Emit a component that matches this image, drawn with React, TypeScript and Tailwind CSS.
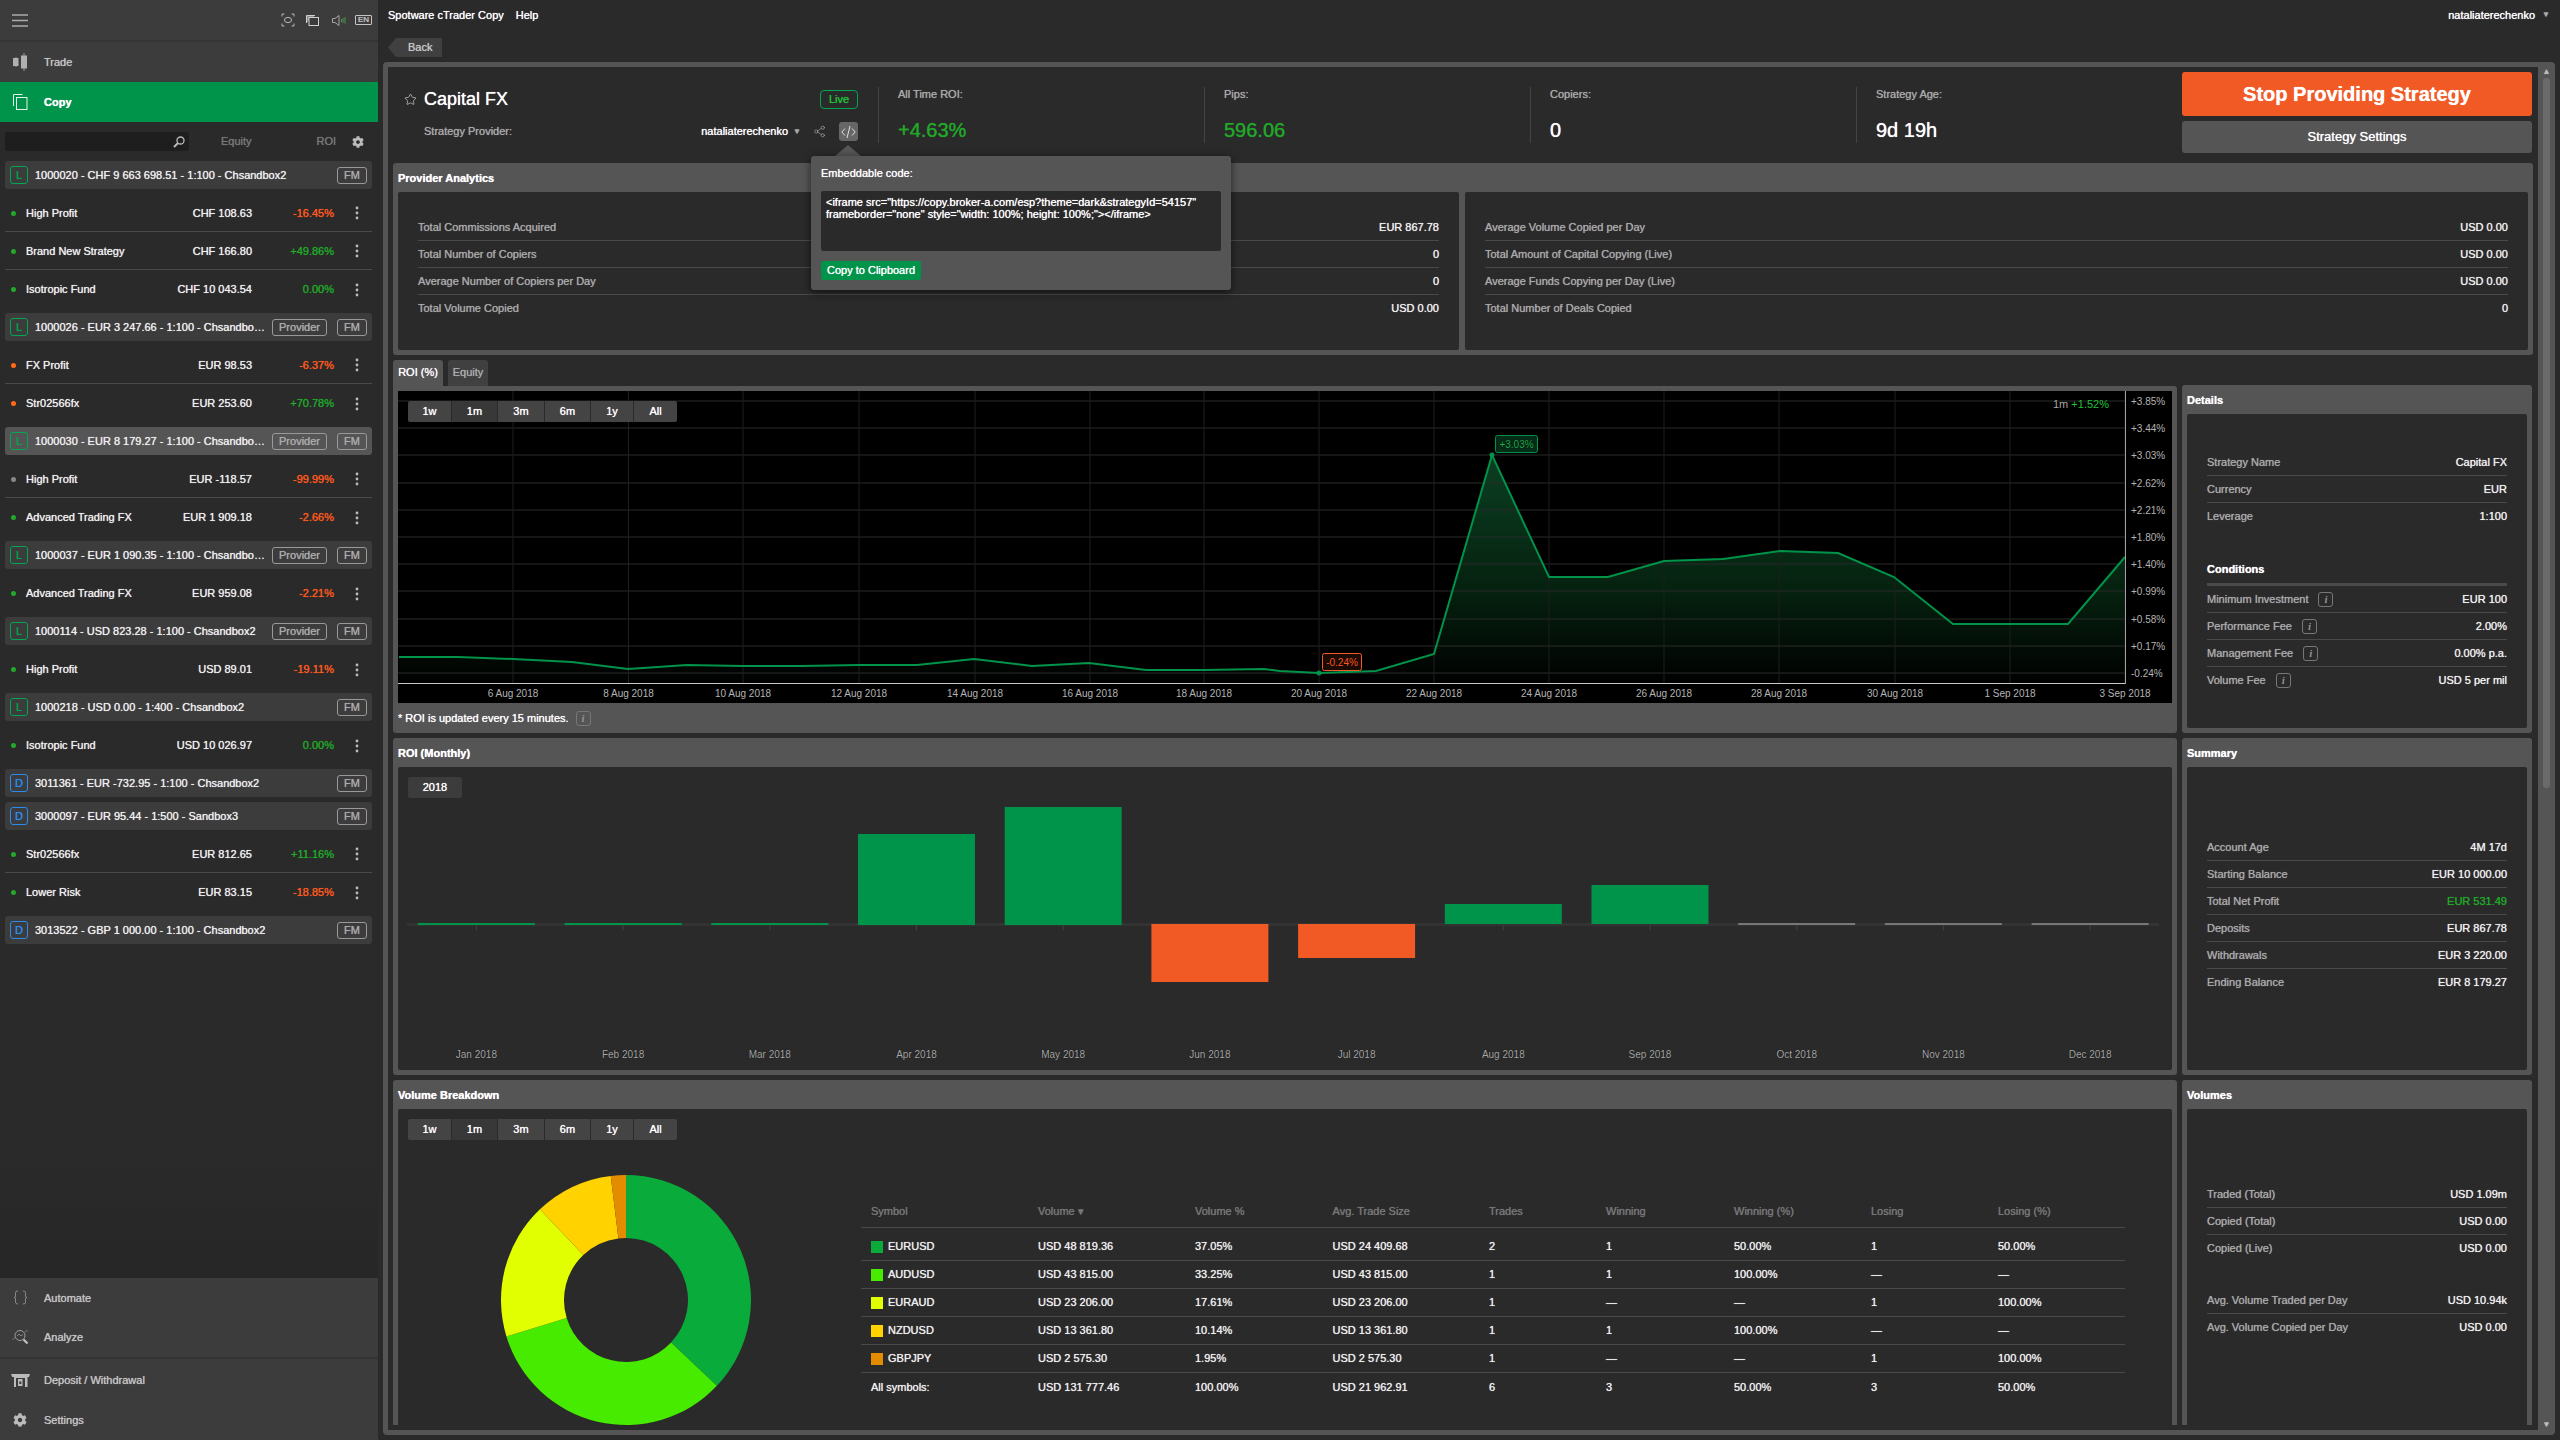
import { ReactNode } from "react";
import { FaCog } from "react-icons/fa";
import { Braces, Share2, Star } from "lucide-react";

type Strat = { dot: string; name: string; val: string; roi: string; up?: boolean };
type Acc = { t: "L" | "D"; text: string; provider?: boolean; sel?: boolean; rows?: Strat[] };
const G = "bg-[#22a82a]";
const O = "bg-[#ff6a13]";
const accounts: Acc[] = [
  { t: "L", text: "1000020 - CHF 9 663 698.51 - 1:100 - Chsandbox2", rows: [
    { dot: G, name: "High Profit", val: "CHF 108.63", roi: "-16.45%" },
    { dot: G, name: "Brand New Strategy", val: "CHF 166.80", roi: "+49.86%", up: true },
    { dot: G, name: "Isotropic Fund", val: "CHF 10 043.54", roi: "0.00%", up: true },
  ]},
  { t: "L", text: "1000026 - EUR 3 247.66 - 1:100 - Chsandbox2", provider: true, rows: [
    { dot: O, name: "FX Profit", val: "EUR 98.53", roi: "-6.37%" },
    { dot: O, name: "Str02566fx", val: "EUR 253.60", roi: "+70.78%", up: true },
  ]},
  { t: "L", text: "1000030 - EUR 8 179.27 - 1:100 - Chsandbox2", provider: true, sel: true, rows: [
    { dot: "bg-[#888888]", name: "High Profit", val: "EUR -118.57", roi: "-99.99%" },
    { dot: G, name: "Advanced Trading FX", val: "EUR 1 909.18", roi: "-2.66%" },
  ]},
  { t: "L", text: "1000037 - EUR 1 090.35 - 1:100 - Chsandbox2", provider: true, rows: [
    { dot: G, name: "Advanced Trading FX", val: "EUR 959.08", roi: "-2.21%" },
  ]},
  { t: "L", text: "1000114 - USD 823.28 - 1:100 - Chsandbox2", provider: true, rows: [
    { dot: G, name: "High Profit", val: "USD 89.01", roi: "-19.11%" },
  ]},
  { t: "L", text: "1000218 - USD 0.00 - 1:400 - Chsandbox2", rows: [
    { dot: G, name: "Isotropic Fund", val: "USD 10 026.97", roi: "0.00%", up: true },
  ]},
  { t: "D", text: "3011361 - EUR -732.95 - 1:100 - Chsandbox2" },
  { t: "D", text: "3000097 - EUR 95.44 - 1:500 - Sandbox3", rows: [
    { dot: G, name: "Str02566fx", val: "EUR 812.65", roi: "+11.16%", up: true },
    { dot: G, name: "Lower Risk", val: "EUR 83.15", roi: "-18.85%" },
  ]},
  { t: "D", text: "3013522 - GBP 1 000.00 - 1:100 - Chsandbox2" },
];

function Tag({ children, w }: { children: ReactNode; w: string }) {
  return <span className={`${w} h-[17px] shrink-0 flex items-center justify-center rounded-[3px] border border-[#999999] text-[11px] text-[#aaaaaa]`}>{children}</span>;
}

function AccountRow({ a }: { a: Acc }) {
  return (
    <div className={`h-[28px] rounded-[3px] flex items-center pl-[5px] pr-[5px] ${a.sel ? "bg-[#555555]" : "bg-[#3c3c3c]"}`}>
      <span className={`w-[18px] h-[18px] shrink-0 flex items-center justify-center rounded-[3px] border text-[11px] ${a.t === "L" ? "border-[#00a651] text-[#00a651]" : "border-[#2b8cf0] text-[#2b8cf0]"}`}>{a.t}</span>
      <span className="ml-[7px] flex-1 min-w-0 truncate text-[11px] text-[#eeeeee]">{a.text}</span>
      {a.provider && <span className="ml-[6.8px]"><Tag w="w-[55px]">Provider</Tag></span>}
      <span className="ml-[10px]"><Tag w="w-[30px]">FM</Tag></span>
    </div>
  );
}

function StrategyRow({ s, last }: { s: Strat; last: boolean }) {
  return (
    <div className={`h-[38px] flex items-center pt-[1px] text-[11px] ${last ? "" : "border-b border-[#4a4a4a]"}`}>
      <span className={`w-[5px] h-[5px] rounded-full ml-[6px] shrink-0 ${s.dot}`} />
      <span className="ml-[10px] flex-1 text-[#eeeeee]">{s.name}</span>
      <span className="text-[#eeeeee]">{s.val}</span>
      <span className={`w-[82px] text-right ${s.up ? "text-[#22a82a]" : "text-[#ff5a1f]"}`}>{s.roi}</span>
      <span className="w-[38px] flex justify-end pr-[13px]">
        <svg width="4" height="14" viewBox="0 0 4 14"><circle cx="2" cy="2" r="1.4" fill="#bbbbbb" /><circle cx="2" cy="7" r="1.4" fill="#bbbbbb" /><circle cx="2" cy="12" r="1.4" fill="#bbbbbb" /></svg>
      </span>
    </div>
  );
}

function NavItem({ icon, label, cls }: { icon: ReactNode; label: string; cls?: string }) {
  return (
    <div className={`h-[40px] flex items-center text-[11px] ${cls ?? "text-[#c4c4c4]"}`}>
      <span className="w-[44px] flex justify-center shrink-0 pr-[4px]">{icon}</span>
      {label}
    </div>
  );
}

function Sidebar() {
  return (
    <div className="w-[378px] h-[1440px] shrink-0 flex flex-col bg-gradient-to-b from-[#2a2a2a] from-80% to-[#222222]">
      <div className="h-[42px] bg-[#3c3c3c] border-b-2 border-[#343434] flex items-center pl-[12px] pr-[6px]">
        <svg width="16" height="13" viewBox="0 0 16 13" stroke="#aaaaaa" strokeWidth="1.4"><path d="M0 1h16M0 6.5h16M0 12h16" /></svg>
        <div className="ml-auto flex items-center">
          <svg width="14" height="14" viewBox="0 0 14 14" fill="none" stroke="#b8b8b8" strokeWidth="1"><path d="M1 3.5V1h2.5M10.5 1H13v2.5M13 10.5V13h-2.5M3.5 13H1v-2.5" /><ellipse cx="7" cy="7" rx="3.6" ry="2.6" /></svg>
          <svg className="ml-[11px]" width="13" height="11" viewBox="0 0 13 11" fill="none" stroke="#d0d0d0"><path d="M.5 8V.5H9" fill="#8c8c8c" /><rect x="3" y="2.5" width="9.5" height="8" fill="#3c3c3c" /></svg>
          <svg className="ml-[13px]" width="14" height="11" viewBox="0 0 14 11" fill="none" stroke="#b0b0b0" strokeWidth="0.9"><path d="M.5 3.5h2.5L7 .5v10L3 7.5H.5z" /><path d="M9.5 4v3M11 3v5" stroke="#4c9c4c" /><path d="M13 2v6.5" stroke="#4c9c4c" /></svg>
          <span className="ml-[9px] w-[17px] h-[10px] border border-[#c4c4c4] rounded-[1px] text-[8px] leading-[8px] text-center text-[#c4c4c4]">EN</span>
        </div>
      </div>
      <div className="bg-[#3c3c3c]">
        <NavItem label="Trade" icon={
          <svg width="15" height="18" viewBox="0 0 15 18" fill="#b0b0b0" stroke="#b0b0b0"><path d="M3 4v10M11 0v18" strokeWidth="0.8" /><rect x=".5" y="5.5" width="4.5" height="7" /><rect x="8.5" y="3" width="5" height="12" /></svg>
        } />
      </div>
      <NavItem label="Copy" cls="bg-[#00934a] text-white font-bold" icon={
        <svg width="15" height="16" viewBox="0 0 15 16" fill="none" stroke="#e6f4ec" strokeWidth="1"><path d="M.5 12V.5h9" /><rect x="3.5" y="3.5" width="10.5" height="12" /></svg>
      } />
      <div className="h-[39px] pl-[5px] pr-[6px] flex items-center text-[11px] text-[#777777]">
        <div className="w-[184px] h-[19px] rounded-[3px] bg-[#1e1e1e] flex items-center justify-end pr-[4px]">
          <svg width="12" height="12" viewBox="0 0 12 12" fill="none" stroke="#bbbbbb" strokeWidth="1.3"><circle cx="7.5" cy="4.5" r="3.5" /><path d="M5 7L1 11" strokeWidth="2" /></svg>
        </div>
        <span className="ml-[32px]">Equity</span>
        <span className="ml-[65px]">ROI</span>
        <FaCog className="ml-[16px] text-[#bbbbbb]" size={12} />
      </div>
      <div className="pl-[5px] pr-[6px] flex-1 flex flex-col gap-[5px]">
        {accounts.map((a, i) => (
          <div key={i} className="flex flex-col gap-[5px]">
            <AccountRow a={a} />
            {a.rows && <div>{a.rows.map((s, j) => <StrategyRow key={j} s={s} last={j === a.rows!.length - 1} />)}</div>}
          </div>
        ))}
      </div>
      <div className="h-[162px] bg-[#3c3c3c] flex flex-col">
        <NavItem label="Automate" icon={<Braces size={17} strokeWidth={1} color="#aaaaaa" />} />
        <NavItem label="Analyze" icon={
          <svg width="17" height="16" viewBox="0 0 17 16" fill="none" stroke="#aaaaaa" strokeWidth="0.9"><circle cx="8" cy="6.5" r="5" /><path d="M5 7l2-2 2 2 2-1.5" strokeWidth="0.7" /><path d="M11.5 10.5l4 4" strokeWidth="2.2" stroke="#c4c4c4" /><path d="M3 8.5L.5 11M13 3l2-1.5 1 1" strokeWidth="0.6" /></svg>
        } />
        <div className="h-[2px] bg-[#343434]" />
        <div className="h-[2px]" />
        <NavItem label="Deposit / Withdrawal" icon={
          <svg width="19" height="13" viewBox="0 0 19 13" fill="#bbbbbb"><path d="M0 0h19l-1 3h-1.5v10H3V3H1.2z" /><rect x="5" y="4" width="9" height="9" fill="#3c3c3c" /><rect x="7" y="5" width="4.5" height="7" fill="#bbbbbb" /><rect x="8.3" y="7.5" width="2" height="2.5" fill="#3c3c3c" /></svg>
        } />
        <NavItem label="Settings" icon={<FaCog size={14} color="#bbbbbb" />} />
      </div>
    </div>
  );
}

function Info({ ml = "ml-[7px]" }: { ml?: string }) {
  return <span className={`${ml} w-[15px] h-[15px] inline-flex items-center justify-center rounded-[3px] border border-[#777777] font-['Liberation_Serif',serif] italic text-[11px] text-[#999999]`}>i</span>;
}

function Row({ label, value, info, last, green, bright }: { label: string; value: string; info?: boolean; last?: boolean; green?: boolean; bright?: boolean }) {
  return (
    <div className={`h-[27px] flex items-center justify-between text-[11px] ${last ? "" : "border-b border-[#4a4a4a]"}`}>
      <span className="flex items-center text-[#a8a8a8]">{label}{info && <Info ml="ml-[10px]" />}</span>
      <span className={green ? "text-[#22a82a]" : bright ? "text-white" : "text-[#eeeeee]"}>{value}</span>
    </div>
  );
}

function Section({ title, h, cls, children }: { title: string; h: string; cls?: string; children: ReactNode }) {
  return (
    <div className={`bg-[#555555] rounded-[3px] px-[5px] pb-[5px] flex flex-col ${h} ${cls ?? ""}`}>
      <div className="h-[29px] shrink-0 pt-[2px] flex items-center text-[11px] font-bold text-white">{title}</div>
      <div className="flex-1 min-h-0 rounded-[2px] bg-[#2a2a2a]">{children}</div>
    </div>
  );
}

function Stat({ label, value, green }: { label: string; value: string; green?: boolean }) {
  return (
    <div className="w-[326px] h-[56px] mt-[20px] border-l border-[#444444] pl-[19px] flex flex-col">
      <span className="text-[11px] leading-[14px] text-[#a8a8a8]">{label}</span>
      <span className={`mt-[17px] text-[20px] leading-[24px] ${green ? "text-[#22a82a]" : "text-white"}`}>{value}</span>
    </div>
  );
}

function RangeButtons() {
  const items = [["1w", "w-[44px]"], ["1m", "w-[46px] bg-[#383838]"], ["3m", "w-[47px]"], ["6m", "w-[46px]"], ["1y", "w-[43px]"], ["All", "w-[43px]"]];
  return (
    <div className="flex w-[269px] h-[21px] rounded-[2px] overflow-hidden bg-[#444444] divide-x divide-[#2a2a2a]">
      {items.map(([t, c]) => <span key={t} className={`${c} flex items-center justify-center text-[11px] text-white`}>{t}</span>)}
    </div>
  );
}

const gridY = [401, 428, 455, 483, 510, 537, 564, 591, 619, 646, 673];
const yLabels = ["+3.85%", "+3.44%", "+3.03%", "+2.62%", "+2.21%", "+1.80%", "+1.40%", "+0.99%", "+0.58%", "+0.17%", "-0.24%"];
const dates = ["6 Aug 2018", "8 Aug 2018", "10 Aug 2018", "12 Aug 2018", "14 Aug 2018", "16 Aug 2018", "18 Aug 2018", "20 Aug 2018", "22 Aug 2018", "24 Aug 2018", "26 Aug 2018", "28 Aug 2018", "30 Aug 2018", "1 Sep 2018", "3 Sep 2018"];
const dateX = [513, 628.5, 743, 859, 975, 1090, 1204, 1319, 1434, 1549, 1664, 1779, 1895, 2010, 2125];
const pts = "399,657 458,657 513,659 572,662 628,669 687,665 743,666 802,666 859,665 917,665 974,659 1032,666 1089,663 1146,670 1204,670 1264,669 1280,671 1319,673 1376,671 1434,654 1492,455 1549,577 1608,577 1664,561 1723,559 1780,551 1838,553 1894,577 1953,624 2068,624 2125,557";

function RoiChart() {
  return (
    <div className="relative h-[312px] bg-black">
      <svg className="block" width="1774" height="312" viewBox="398 391 1774 312">
        <defs>
          <linearGradient id="roi" gradientUnits="userSpaceOnUse" x1="0" y1="455" x2="0" y2="683">
            <stop offset="0" stopColor="#0b3f22" />
            <stop offset="0.6" stopColor="#05210f" />
            <stop offset="1" stopColor="#000000" />
          </linearGradient>
        </defs>
        <polygon points={`399,683 ${pts} 2125,683`} fill="url(#roi)" />
        {gridY.map((y) => <line key={y} x1="398" x2="2125" y1={y} y2={y} stroke="#2a2a2a" />)}
        {dateX.map((x) => <line key={x} x1={x} x2={x} y1="391" y2="683" stroke="#1f1f1f" />)}
        <polyline points={pts} fill="none" stroke="#00934a" strokeWidth="2" />
        <line x1="398" x2="2125" y1="683.5" y2="683.5" stroke="#c8c8c8" />
        <line x1="2125.5" x2="2125.5" y1="391" y2="684" stroke="#c8c8c8" strokeWidth="0.8" />
        {gridY.map((y, i) => <text key={y} x="2131" y={y + 3.5} className="fill-[#b4b4b4] text-[10px]">{yLabels[i]}</text>)}
        {dates.map((d, i) => <text key={d} x={dateX[i]} y="697" textAnchor="middle" className="fill-[#b4b4b4] text-[10px]">{d}</text>)}
        <circle cx="1492" cy="455" r="2.5" fill="#00934a" />
        <circle cx="1319" cy="673" r="2.5" fill="#00934a" />
        <rect x="1495.5" y="435.5" width="42" height="17" rx="2" fill="#062b16" stroke="#00934a" />
        <text x="1516.5" y="447.5" textAnchor="middle" className="fill-[#22a84a] text-[10px]">+3.03%</text>
        <rect x="1322.5" y="653.5" width="39" height="17" rx="2" fill="#1c0a04" stroke="#f15a24" />
        <text x="1342" y="665.5" textAnchor="middle" className="fill-[#ff5a1f] text-[10px]">-0.24%</text>
        <text x="2053" y="408" className="fill-[#a8a8a8] text-[11px]">1m <tspan className="fill-[#22c03a]">+1.52%</tspan></text>
      </svg>
      <div className="absolute left-[10px] top-[10px]"><RangeButtons /></div>
    </div>
  );
}

const months = ["Jan", "Feb", "Mar", "Apr", "May", "Jun", "Jul", "Aug", "Sep", "Oct", "Nov", "Dec"];
const bars: [number, number, string][] = [
  [923, 925, "#00934a"], [923, 925, "#00934a"], [923, 925, "#00934a"],
  [834, 925, "#00934a"], [807, 925, "#00934a"], [924, 982, "#f15a24"], [924, 958, "#f15a24"],
  [904, 924, "#00934a"], [885, 924, "#00934a"], [923, 925, "#777777"], [923, 925, "#777777"], [923, 925, "#777777"],
];

function MonthlyChart() {
  return (
    <svg className="block" width="1774" height="272" viewBox="398 798 1774 272">
      <rect x="407" y="923" width="1752" height="3" fill="#333333" />
      {months.map((m, i) => {
        const cx = 476.4 + 146.7 * i;
        const [t, b, c] = bars[i];
        return (
          <g key={m}>
            <line x1={cx} x2={cx} y1="926" y2="930" stroke="#444444" />
            <rect x={cx - 58.5} y={t} width="117" height={b - t} fill={c} />
            <text x={cx} y="1058" textAnchor="middle" className="fill-[#a8a8a8] text-[10px]">{m} 2018</text>
          </g>
        );
      })}
    </svg>
  );
}

const slices: [number, string][] = [[37.05, "#09ab3b"], [33.25, "#46eb00"], [17.61, "#e1ff00"], [10.14, "#ffd200"], [1.95, "#e38c00"]];
function Donut() {
  let a = 0;
  const R = 125, r = 62;
  const p = (rad: number, deg: number) => `${125 + rad * Math.sin((deg * Math.PI) / 180)} ${125 - rad * Math.cos((deg * Math.PI) / 180)}`;
  return (
    <svg className="block shrink-0" width="250" height="250" viewBox="0 0 250 250">
      {slices.map(([v, c]) => {
        const s = a, e = a + v * 3.6;
        a = e;
        const l = v > 50 ? 1 : 0;
        return <path key={c} fill={c} d={`M${p(R, s)} A${R} ${R} 0 ${l} 1 ${p(R, e)} L${p(r, e)} A${r} ${r} 0 ${l} 0 ${p(r, s)} Z`} />;
      })}
    </svg>
  );
}

const cols = "grid grid-cols-[167px_157px_137.5px_156.5px_117px_128px_137px_127px_1fr] pl-[10px]";
const head = ["Symbol", "Volume ▾", "Volume %", "Avg. Trade Size", "Trades", "Winning", "Winning (%)", "Losing", "Losing (%)"];
const tbl: [string | null, ...string[]][] = [
  ["#09ab3b", "EURUSD", "USD 48 819.36", "37.05%", "USD 24 409.68", "2", "1", "50.00%", "1", "50.00%"],
  ["#46eb00", "AUDUSD", "USD 43 815.00", "33.25%", "USD 43 815.00", "1", "1", "100.00%", "—", "—"],
  ["#e1ff00", "EURAUD", "USD 23 206.00", "17.61%", "USD 23 206.00", "1", "—", "—", "1", "100.00%"],
  ["#ffd200", "NZDUSD", "USD 13 361.80", "10.14%", "USD 13 361.80", "1", "1", "100.00%", "—", "—"],
  ["#e38c00", "GBPJPY", "USD 2 575.30", "1.95%", "USD 2 575.30", "1", "—", "—", "1", "100.00%"],
  [null, "All symbols:", "USD 131 777.46", "100.00%", "USD 21 962.91", "6", "3", "50.00%", "3", "50.00%"],
];

function VolumeTable() {
  return (
    <div className="w-[1264px] ml-[110px] mt-[56px] text-[11px]">
      <div className={`${cols} h-[32px] items-center border-b border-[#4a4a4a] text-[#777777]`}>
        {head.map((h) => <span key={h}>{h}</span>)}
      </div>
      <div className="h-[5px]" />
      {tbl.map(([c, ...rest], i) => (
        <div key={i} className={`${cols} h-[28px] items-center text-[#eeeeee] ${i < 5 ? "border-b border-[#4a4a4a]" : ""}`}>
          {rest.map((t, j) => (
            <span key={j} className="flex items-center">
              {j === 0 && c && <svg className="mr-[5px]" width="12" height="12"><rect width="12" height="12" fill={c} /></svg>}
              {t}
            </span>
          ))}
        </div>
      ))}
    </div>
  );
}

function Popup() {
  return (
    <div className="absolute left-[423px] top-[78px] z-10">
      <div className="ml-[24px] w-0 h-0 border-x-[13px] border-x-transparent border-b-[11px] border-b-[#555555]" />
      <div className="w-[420px] h-[134px] rounded-[3px] bg-[#555555] shadow-[0_2px_8px_rgba(0,0,0,0.6)] px-[10px] pt-[10px]">
        <div className="h-[14px] text-[11px] leading-[14px] text-white">Embeddable code:</div>
        <div className="mt-[11px] h-[60px] rounded-[2px] bg-[#2a2a2a] px-[5px] pt-[5px] text-[11px] leading-[12px] text-white">
          &lt;iframe src="https://copy.broker-a.com/esp?theme=dark&amp;strategyId=54157"<br />
          frameborder="none" style="width: 100%; height: 100%;"&gt;&lt;/iframe&gt;
        </div>
        <div className="mt-[10px] w-[100px] h-[19px] rounded-[2px] bg-[#00934a] flex items-center justify-center text-[11px] text-white">Copy to Clipboard</div>
      </div>
    </div>
  );
}

function Content() {
  return (
    <div className="relative flex-1 min-w-0 h-[1358px] overflow-hidden px-[5px]">
      {/* header */}
      <div className="h-[96px] flex">
        <div className="w-[485px] shrink-0 flex flex-col pr-[20px]">
          <div className="mt-[23px] h-[19px] flex items-center pl-[11px] justify-between">
            <span className="flex items-center text-[18px] text-white">
              <Star size={13} strokeWidth={1.2} color="#dddddd" />
              <span className="ml-[7px]">Capital FX</span>
            </span>
            <span className="w-[38px] h-[19px] rounded-[4px] border border-[#00a651] flex items-center justify-center text-[11px] text-[#22c03a]">Live</span>
          </div>
          <div className="mt-[13px] h-[19px] flex items-center pl-[31px] text-[11px]">
            <span className="text-[#a8a8a8]">Strategy Provider:</span>
            <span className="ml-auto text-white">nataliaterechenko</span>
            <span className="ml-[5px] text-[8px] text-[#aaaaaa]">▼</span>
            <Share2 className="ml-[12px]" size={13} strokeWidth={1} color="#bbbbbb" />
            <span className="ml-[13px] w-[19px] h-[19px] rounded-[3px] bg-[#666666] flex items-center justify-center">
              <svg width="15" height="14" viewBox="0 0 15 14" fill="none" stroke="#eeeeee" strokeWidth="0.9"><path d="M4 3.5L.8 7 4 10.5M11 3.5L14.2 7 11 10.5M9 1L6 13" /></svg>
            </span>
          </div>
        </div>
        <Stat label="All Time ROI:" value="+4.63%" green />
        <Stat label="Pips:" value="596.06" green />
        <Stat label="Copiers:" value="0" />
        <Stat label="Strategy Age:" value="9d 19h" />
        <div className="w-[350px] shrink-0 flex flex-col pt-[5px] gap-[5px]">
          <div className="h-[44px] rounded-[3px] bg-[#f15a24] flex items-center justify-center text-[20px] font-bold text-white">Stop Providing Strategy</div>
          <div className="h-[32px] rounded-[3px] bg-[#555555] flex items-center justify-center text-[13px] text-white">Strategy Settings</div>
        </div>
      </div>
      <Popup />

      {/* provider analytics */}
      <div className="bg-[#555555] rounded-[3px] h-[192px] px-[5px] pb-[5px] flex flex-col">
        <div className="h-[29px] pt-[2px] flex items-center text-[11px] font-bold text-white">Provider Analytics</div>
        <div className="flex-1 flex gap-[6px]">
          <div className="w-[1061px] shrink-0 rounded-[2px] bg-[#2a2a2a] px-[20px] pt-[22px]">
            <Row label="Total Commissions Acquired" value="EUR 867.78" />
            <Row label="Total Number of Copiers" value="0" />
            <Row label="Average Number of Copiers per Day" value="0" />
            <Row label="Total Volume Copied" value="USD 0.00" last />
          </div>
          <div className="flex-1 rounded-[2px] bg-[#2a2a2a] px-[20px] pt-[22px]">
            <Row label="Average Volume Copied per Day" value="USD 0.00" />
            <Row label="Total Amount of Capital Copying (Live)" value="USD 0.00" />
            <Row label="Average Funds Copying per Day (Live)" value="USD 0.00" />
            <Row label="Total Number of Deals Copied" value="0" last />
          </div>
        </div>
      </div>

      {/* ROI chart + details */}
      <div className="mt-[5px] flex gap-[5px]">
        <div className="w-[1784px] shrink-0 flex flex-col">
          <div className="h-[26px] flex gap-[5px] text-[11px]">
            <span className="w-[50px] rounded-t-[3px] bg-[#555555] flex items-center justify-center pb-[2px] text-white">ROI (%)</span>
            <span className="w-[40px] rounded-t-[3px] bg-[#404040] flex items-center justify-center pb-[2px] text-[#aaaaaa]">Equity</span>
          </div>
          <div className="h-[347px] bg-[#555555] rounded-b-[3px] rounded-tr-[3px] px-[5px] pt-[5px]">
            <RoiChart />
            <div className="h-[30px] flex items-center text-[11px] text-white">* ROI is updated every 15 minutes.<Info /></div>
          </div>
        </div>
        <div className="w-[350px] shrink-0 pt-[25px]">
          <Section title="Details" h="h-[348px]">
            <div className="px-[20px] pt-[35px]">
              <Row label="Strategy Name" value="Capital FX" />
              <Row label="Currency" value="EUR" />
              <Row label="Leverage" value="1:100" last />
              <div className="mt-[26px] h-[30px] flex items-center border-b-[3px] border-[#4a4a4a] text-[11px] font-bold text-white">Conditions</div>
              <Row label="Minimum Investment" value="EUR 100" info />
              <Row label="Performance Fee" value="2.00%" info />
              <Row label="Management Fee" value="0.00% p.a." info />
              <Row label="Volume Fee" value="USD 5 per mil" info last />
            </div>
          </Section>
        </div>
      </div>

      {/* monthly + summary */}
      <div className="mt-[5px] flex gap-[5px]">
        <Section title="ROI (Monthly)" h="h-[337px]" cls="w-[1784px] shrink-0">
          <div className="pl-[10px] pt-[10px]">
            <span className="w-[54px] h-[21px] rounded-[2px] bg-[#3c3c3c] flex items-center justify-center text-[11px] text-white">2018</span>
          </div>
          <MonthlyChart />
        </Section>
        <Section title="Summary" h="h-[337px]" cls="w-[350px] shrink-0">
          <div className="px-[20px] pt-[67px]">
            <Row label="Account Age" value="4M 17d" />
            <Row label="Starting Balance" value="EUR 10 000.00" />
            <Row label="Total Net Profit" value="EUR 531.49" green />
            <Row label="Deposits" value="EUR 867.78" />
            <Row label="Withdrawals" value="EUR 3 220.00" />
            <Row label="Ending Balance" value="EUR 8 179.27" last />
          </div>
        </Section>
      </div>

      {/* volume + volumes */}
      <div className="mt-[5px] flex gap-[5px]">
        <Section title="Volume Breakdown" h="h-[440px]" cls="w-[1784px] shrink-0">
          <div className="pl-[10px] pt-[10px]"><RangeButtons /></div>
          <div className="flex items-start">
            <div className="ml-[103px] mt-[35px]"><Donut /></div>
            <VolumeTable />
          </div>
        </Section>
        <Section title="Volumes" h="h-[440px]" cls="w-[350px] shrink-0">
          <div className="px-[20px] pt-[72px]">
            <Row label="Traded (Total)" value="USD 1.09m" />
            <Row label="Copied (Total)" value="USD 0.00" />
            <Row label="Copied (Live)" value="USD 0.00" last />
            <div className="h-[25px]" />
            <Row label="Avg. Volume Traded per Day" value="USD 10.94k" />
            <Row label="Avg. Volume Copied per Day" value="USD 0.00" last />
          </div>
        </Section>
      </div>
    </div>
  );
}

export default function App() {
  return (
    <div className="w-[2560px] h-[1440px] overflow-hidden flex bg-[#2a2a2a] font-['Liberation_Sans',Arial,sans-serif] [text-shadow:0_0_0.7px_currentColor]">
      <Sidebar />
      <div className="flex-1 min-w-0 flex flex-col pl-[5px] pr-[5px]">
        <div className="h-[30px] shrink-0 flex items-center pl-[5px] pr-[5px] text-[11px] text-white">
          <span>Spotware cTrader Copy</span>
          <span className="ml-[12px]">Help</span>
          <span className="ml-auto">nataliaterechenko</span>
          <span className="ml-[7px] text-[8px] text-[#aaaaaa]">▼</span>
        </div>
        <div className="h-[32px] shrink-0 pl-[5px] pt-[8px]">
          <div className="w-[54px] h-[19px] bg-[#404040] flex items-center pl-[20px] text-[11px] text-[#c4c4c4] [clip-path:polygon(8px_0,100%_0,100%_100%,8px_100%,0_50%)]">Back</div>
        </div>
        <div className="h-[1373px] shrink-0 border-[5px] border-[#555555] rounded-[4px] flex overflow-hidden">
          <Content />
          <div className="w-[12px] h-full shrink-0 bg-[#555555] flex flex-col items-center pl-[5px] pt-[1px]">
            <span className="text-[8px] leading-[8px] text-[#bbbbbb]">▲</span>
            <div className="w-[7px] h-[710px] mt-[2px] rounded-[3px] bg-[#6a6a6a]" />
            <span className="mt-auto mb-[1px] text-[8px] leading-[8px] text-[#bbbbbb]">▼</span>
          </div>
        </div>
      </div>
    </div>
  );
}
